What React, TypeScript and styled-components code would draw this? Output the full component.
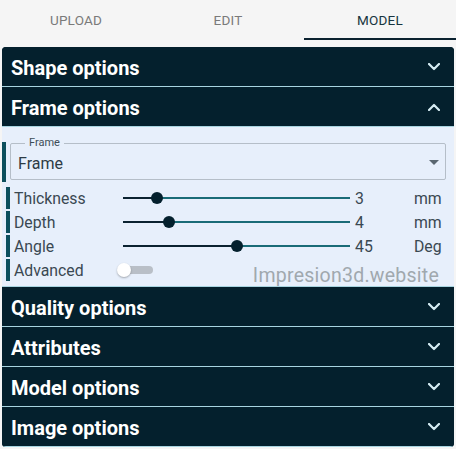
import React from "react";
import styled, { createGlobalStyle } from "styled-components";

const Global = createGlobalStyle`
  html, body { margin: 0; padding: 0; background: #f5f5f5; }
  body { font-family: Roboto, "Liberation Sans", sans-serif; width: 456px; height: 449px; overflow: hidden; }
`;

const Page = styled.div`
  width: 456px;
`;

const Tabs = styled.div`
  display: grid;
  grid-template-columns: repeat(3, 1fr);
  height: 40px;
`;

const Tab = styled.div<{ $active?: boolean }>`
  display: flex;
  align-items: center;
  justify-content: center;
  font-size: 13.5px;
  letter-spacing: 0.2px;
  color: ${(p) => (p.$active ? "#173440" : "#7a7a7a")};
  border-bottom: 2px solid ${(p) => (p.$active ? "#0b2230" : "transparent")};
  padding-top: 1px;
`;

const Panel = styled.div`
  margin: 7px 2px 0;
  border-radius: 4px;
  overflow: hidden;
  background: #04202d;
`;

const Header = styled.div`
  display: flex;
  align-items: center;
  justify-content: space-between;
  padding: 3px 14px 0 9px;
  box-sizing: border-box;
  background: #04202d;
  color: #ffffff;
  font-weight: 700;
  font-size: 20px;
  border-bottom: 1px solid #a8d4e0;
  height: 40px;
`;

const Chevron = styled.svg`
  width: 12px;
  height: 8px;
  margin-top: -3px;
`;

const Content = styled.div`
  position: relative;
  background: #e7effb;
  height: 160px;
  padding-top: 15px;
  box-sizing: border-box;
  border-bottom: 1px solid #a8d4e0;
`;

const SelectRow = styled.div`
  display: flex;
  align-items: stretch;
  gap: 4px;
  height: 40px;
`;

const AccentBar = styled.div`
  width: 4px;
  background: #0d4f5c;
  flex-shrink: 0;
`;

const Outline = styled.div`
  position: relative;
  flex: 1;
  margin: 1px 8px 2px 0;
  padding: 0 6px 0 7px;
  border: 1px solid #b5bec8;
  border-radius: 2px;
  display: flex;
  align-items: center;
  justify-content: space-between;
`;

const FloatLabel = styled.span`
  position: absolute;
  top: -7px;
  left: 14px;
  font-size: 11px;
  line-height: 12px;
  color: #3d4d58;
  padding: 0 4px;
  background: #e7effb;
`;

const SelectValue = styled.span`
  font-size: 16px;
  color: #2d3b45;
  margin-top: 3px;
`;

const Caret = styled.span`
  width: 0;
  height: 0;
  border-left: 5px solid transparent;
  border-right: 5px solid transparent;
  border-top: 5px solid #5a6670;
  margin-top: 2px;
`;

const Rows = styled.div`
  display: flex;
  flex-direction: column;
  gap: 2px;
  margin-top: 5px;
  padding-left: 4px;
`;

const Row = styled.div`
  display: grid;
  grid-template-columns: 4px 104px 236px 64px 1fr;
  align-items: center;
  height: 22px;
`;

const RowBar = styled.div`
  background: #0d4f5c;
  height: 100%;
`;

const Label = styled.span`
  font-size: 15.8px;
  color: #3a4852;
  padding-left: 4px;
`;

const Value = styled.span`
  font-size: 15.8px;
  color: #3a4852;
  padding-left: 5px;
`;

const Unit = styled.span`
  font-size: 15.8px;
  color: #3a4852;
`;

const Track = styled.div`
  position: relative;
  height: 2px;
  width: 227px;
  background: #1a6b77;
  margin-left: 9px;
`;

const TrackFill = styled.div`
  position: absolute;
  left: 0;
  top: 0;
  height: 2px;
  background: #0b2230;
`;

const Thumb = styled.div`
  position: absolute;
  top: 50%;
  width: 12px;
  height: 12px;
  border-radius: 50%;
  background: #04202d;
  transform: translate(-50%, -50%);
`;

const SwitchTrack = styled.div`
  position: relative;
  width: 34px;
  height: 8px;
  border-radius: 4px;
  background: #b9bfc7;
  margin-left: 5px;
`;

const SwitchThumb = styled.div`
  position: absolute;
  left: -2px;
  top: 50%;
  width: 14px;
  height: 14px;
  border-radius: 50%;
  background: #ffffff;
  transform: translateY(-50%);
  box-shadow: 0 1px 2px rgba(0, 0, 0, 0.3);
`;

const Watermark = styled.div`
  position: absolute;
  right: 15px;
  bottom: -1px;
  font-size: 19.5px;
  color: #a0a8ae;
  letter-spacing: 0.25px;
`;

const ChevronIcon = ({ up }: { up?: boolean }) => (
  <Chevron viewBox="0 0 12 8">
    <polyline
      points={up ? "1,7 6,2 11,7" : "1,1 6,6 11,1"}
      fill="none"
      stroke="#d6ecf3"
      strokeWidth="2.2"
      strokeLinecap="round"
      strokeLinejoin="round"
    />
  </Chevron>
);

const sliders = [
  { label: "Thickness", value: "3", unit: "mm", pos: 34 },
  { label: "Depth", value: "4", unit: "mm", pos: 46 },
  { label: "Angle", value: "45", unit: "Deg", pos: 114 },
];

const sections = ["Quality options", "Attributes", "Model options", "Image options"];

export default function App() {
  return (
    <Page>
      <Global />
      <Tabs>
        <Tab>UPLOAD</Tab>
        <Tab>EDIT</Tab>
        <Tab $active>MODEL</Tab>
      </Tabs>
      <Panel>
        <Header>
          Shape options
          <ChevronIcon />
        </Header>
        <Header>
          Frame options
          <ChevronIcon up />
        </Header>
        <Content>
          <SelectRow>
            <AccentBar />
            <Outline>
              <FloatLabel>Frame</FloatLabel>
              <SelectValue>Frame</SelectValue>
              <Caret />
            </Outline>
          </SelectRow>
          <Rows>
            {sliders.map((s) => (
              <Row key={s.label}>
                <RowBar />
                <Label>{s.label}</Label>
                <Track>
                  <TrackFill style={{ width: s.pos }} />
                  <Thumb style={{ left: s.pos }} />
                </Track>
                <Value>{s.value}</Value>
                <Unit>{s.unit}</Unit>
              </Row>
            ))}
            <Row>
              <RowBar />
              <Label>Advanced</Label>
              <SwitchTrack>
                <SwitchThumb />
              </SwitchTrack>
            </Row>
          </Rows>
          <Watermark>Impresion3d.website</Watermark>
        </Content>
        {sections.map((s) => (
          <Header key={s}>
            {s}
            <ChevronIcon />
          </Header>
        ))}
      </Panel>
    </Page>
  );
}
